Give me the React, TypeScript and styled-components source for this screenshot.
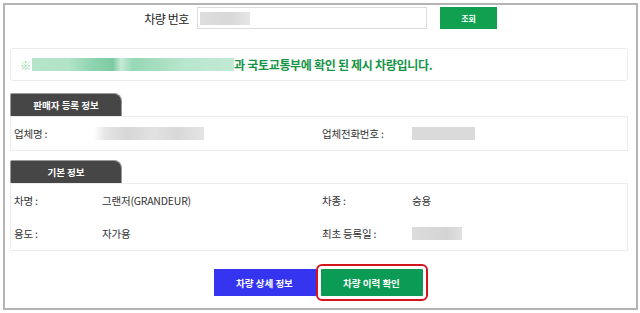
import React from "react";
import styled, { createGlobalStyle } from "styled-components";

const Global = createGlobalStyle`
  html, body { margin: 0; padding: 0; background: #fff; }
  body { font-family: "Noto Sans CJK KR", "Noto Sans", sans-serif; color: #333; }
`;

const Frame = styled.div`
  box-sizing: border-box;
  margin: 3px 0 0 3px;
  width: 635px;
  height: 307px;
  border: 2px solid #b4b4b4;
  padding: 2px 8px 0 5px;
  display: flex;
  flex-direction: column;
`;

const SearchRow = styled.div`
  display: flex;
  align-items: center;
  height: 22px;
`;

const SearchLabel = styled.div`
  width: 179px;
  text-align: right;
  font-size: 12px;
  letter-spacing: -0.4px;
  color: #222;
  margin-right: 8px;
`;

const Input = styled.div`
  box-sizing: border-box;
  width: 230px;
  height: 22px;
  border: 1px solid #dcdcdc;
  padding: 3px 2px;
  display: flex;
  align-items: center;
`;

const Blur = styled.div<{ $w: number; $h: number; $bg: string; $shift?: number }>`
  width: ${(p) => p.$w}px;
  height: ${(p) => p.$h}px;
  margin-left: ${(p) => p.$shift ?? 0}px;
  background: ${(p) => p.$bg};
  filter: blur(0.6px);
`;

const SmallButton = styled.button`
  margin-left: 13px;
  width: 57px;
  height: 22px;
  border: none;
  background: #10a050;
  color: #fff;
  font-family: inherit;
  font-size: 8px;
  font-weight: 700;
  padding: 0;
`;

const Notice = styled.div`
  margin-top: 19px;
  box-sizing: border-box;
  height: 33px;
  border: 1px solid #ececec;
  border-radius: 3px;
  display: flex;
  align-items: center;
  padding-left: 9px;
  color: #159447;
  font-size: 12px;
  font-weight: 700;
  letter-spacing: -0.3px;
`;

const Mark = styled.span`
  color: #8fd3a8;
  font-weight: 400;
  font-size: 11px;
  margin-right: 1px;
  width: 11px;
`;

const Tab = styled.div<{ $top: number }>`
  margin-top: ${(p) => p.$top}px;
  box-sizing: border-box;
  width: 112px;
  height: 23px;
  background: #464646;
  border: 1px solid #9a9a9a;
  border-bottom: none;
  border-radius: 2px 8px 0 0;
  color: #fff;
  font-size: 9.5px;
  font-weight: 700;
  display: flex;
  align-items: center;
  justify-content: center;
`;

const InfoBox = styled.div`
  box-sizing: border-box;
  border: 1px solid #ececec;
  display: flex;
  flex-direction: column;
`;

const Row = styled.div`
  display: grid;
  grid-template-columns: 88px 220px 90px 1fr;
  align-items: center;
  height: 33px;
  padding-left: 3px;
  font-size: 10.5px;
  letter-spacing: -0.2px;
  color: #333;
`;

const ButtonRow = styled.div`
  margin-top: 18px;
  display: flex;
  justify-content: center;
  gap: 5px;
  padding-right: 2px;
`;

const ActionButton = styled.button<{ $bg: string; $highlight?: boolean }>`
  width: 102px;
  height: 27px;
  border: none;
  padding: 0;
  background: ${(p) => p.$bg};
  color: #fff;
  font-family: inherit;
  font-size: 9.5px;
  font-weight: 700;
  ${(p) =>
    p.$highlight
      ? `outline: 2px solid #d3141f; outline-offset: 3px; border-radius: 1px;`
      : ""}
`;

const grayBlur =
  "linear-gradient(90deg, #fff 0%, #e6e6e6 10%, #d6d6d6 30%, #e2e2e2 55%, #d8d8d8 75%, #e4e4e4 100%)";

export default function App() {
  return (
    <>
      <Global />
      <Frame>
        <SearchRow>
          <SearchLabel>차량 번호</SearchLabel>
          <Input>
            <Blur $w={50} $h={13} $bg="linear-gradient(90deg,#dedede,#d8d8d8 60%,#e6e6e6)" />
          </Input>
          <SmallButton>조회</SmallButton>
        </SearchRow>
        <Notice>
          <Mark>※</Mark>
          <Blur
            $w={202}
            $h={13}
            $bg="linear-gradient(90deg,#b6e4cb 0%,#b2e2c8 18%,#8fd4b0 30%,#7ccaa2 40%,#c6ebd6 44%,#97d7b6 50%,#a6ddc0 62%,#b8e6ce 75%,#c2e9d4 100%)"
          />
          <span>과 국토교통부에 확인 된 제시 차량입니다.</span>
        </Notice>
        <Tab $top={12}>판매자 등록 정보</Tab>
        <InfoBox>
          <Row>
            <span>업체명 :</span>
            <Blur $w={110} $h={13} $bg={grayBlur} $shift={-8} />
            <span>업체전화번호 :</span>
            <Blur $w={63} $h={13} $bg="#dadada" />
          </Row>
        </InfoBox>
        <Tab $top={9}>기본 정보</Tab>
        <InfoBox>
          <Row>
            <span>차명 :</span>
            <span>그랜저(GRANDEUR)</span>
            <span>차종 :</span>
            <span>승용</span>
          </Row>
          <Row>
            <span>용도 :</span>
            <span>자가용</span>
            <span>최초 등록일 :</span>
            <Blur $w={50} $h={13} $bg="linear-gradient(90deg,#dcdcdc,#d4d4d4 70%,#e0e0e0)" />
          </Row>
        </InfoBox>
        <ButtonRow>
          <ActionButton $bg="#3535f0">차량 상세 정보</ActionButton>
          <ActionButton $bg="#0c9b55" $highlight>
            차량 이력 확인
          </ActionButton>
        </ButtonRow>
      </Frame>
    </>
  );
}
